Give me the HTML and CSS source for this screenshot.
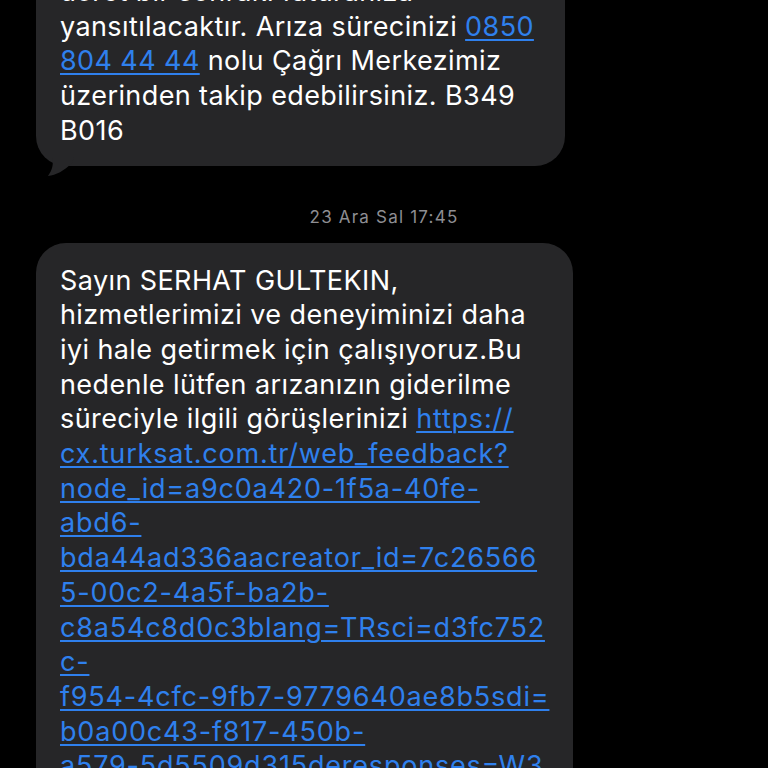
FILE: index.html
```html
<!DOCTYPE html>
<html lang="tr">
<head>
<meta charset="utf-8">
<link rel="stylesheet" href="styles.css">
</head>
<body>
<div class="thread">
  <div class="bubble bubble-a">
    <p class="msg">ücret bir sonraki faturanıza<br>yansıtılacaktır. Arıza sürecinizi <a class="link">0850</a><br><a class="link">804 44 44</a> nolu Çağrı Merkezimiz<br>üzerinden takip edebilirsiniz. B349<br>B016</p>
    <svg class="tail" width="30" height="20" viewBox="0 0 30 20"><path d="M4 0 C6 8 4 13 0 19 C8 18 16 14 24 6 L26 0 Z" fill="#262628"/></svg>
  </div>
  <div class="stamp">23 Ara Sal 17:45</div>
  <div class="bubble bubble-b">
    <p class="msg">Sayın SERHAT GULTEKIN,<br>hizmetlerimizi ve deneyiminizi daha<br>iyi hale getirmek için çalışıyoruz.Bu<br>nedenle lütfen arızanızın giderilme<br>süreciyle ilgili görüşlerinizi <a class="link url">https://</a><br><a class="link url">cx.turksat.com.tr/web_feedback?</a><br><a class="link url">node_id=a9c0a420-1f5a-40fe-</a><br><a class="link url">abd6-</a><br><a class="link url">bda44ad336aacreator_id=7c26566</a><br><a class="link url">5-00c2-4a5f-ba2b-</a><br><a class="link url">c8a54c8d0c3blang=TRsci=d3fc752</a><br><a class="link url">c-</a><br><a class="link url">f954-4cfc-9fb7-9779640ae8b5sdi=</a><br><a class="link url">b0a00c43-f817-450b-</a><br><a class="link url">a579-5d5509d315deresponses=W3</a></p>
  </div>
</div>
</body>
</html>
```
FILE: styles.css
```css
html, body {
  margin: 0;
  padding: 0;
  background: #000;
  height: 768px;
  overflow: hidden;
}
.thread {
  display: flex;
  flex-direction: column;
  align-items: flex-start;
  margin-top: -44px;
  font-family: Inter, "Noto Sans", sans-serif;
}
.bubble {
  position: relative;
  box-sizing: border-box;
  margin-left: 36px;
  background: #262628;
  border-radius: 30px;
  padding: 19px 20px 17px 24px;
}
.bubble-a { width: 529px; }
.bubble-b { width: 537px; padding-top: 21px; }
.msg {
  margin: 0;
  color: #fff;
  font-size: 27px;
  letter-spacing: 0.4px;
  line-height: 34.7px;
  white-space: nowrap;
}
.link {
  color: #2f80ed;
  text-decoration: underline;
  text-decoration-thickness: 2px;
  text-underline-offset: 3px;
}
.url {
  letter-spacing: 0.8px;
}
.tail {
  position: absolute;
  left: 12px;
  bottom: -11px;
}
.stamp {
  align-self: center;
  color: #8e8e93;
  font-size: 17px;
  letter-spacing: 1.2px;
  margin: 41px 0 16px;
  line-height: 20px;
}
```
